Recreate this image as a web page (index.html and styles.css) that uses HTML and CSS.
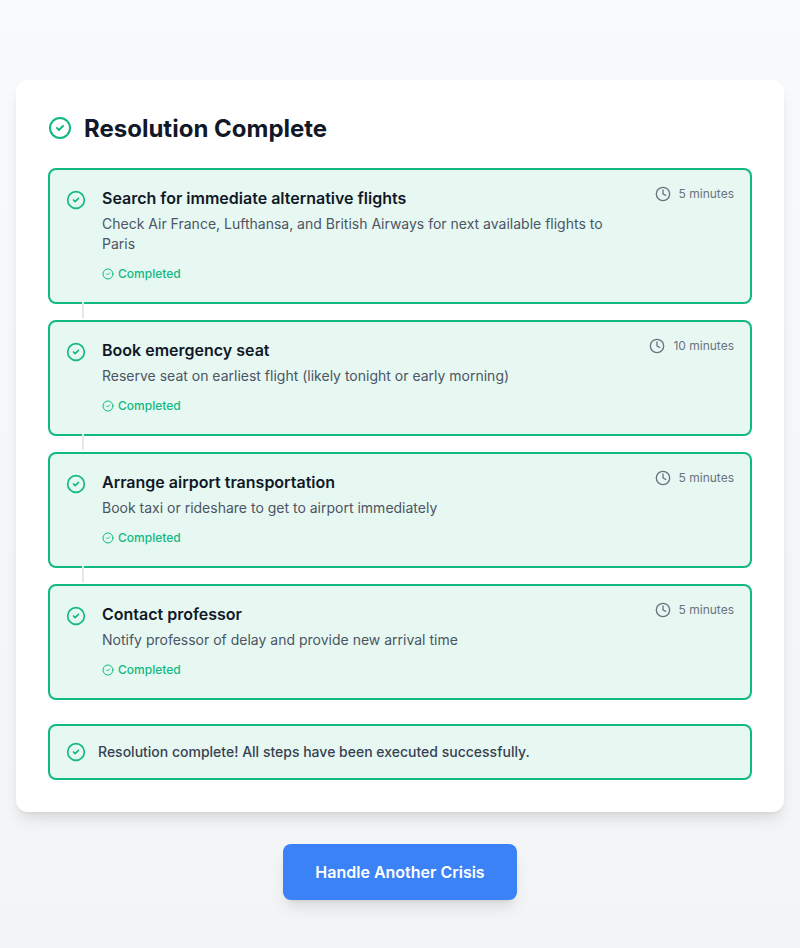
FILE: index.html
```html
<!DOCTYPE html>
<html lang="en">
<head>
<meta charset="utf-8">
<title>Resolution Complete</title>
<link rel="stylesheet" href="styles.css">
</head>
<body>
<svg class="defs" aria-hidden="true">
  <symbol id="check" viewBox="0 0 24 24"><circle cx="12" cy="12" r="10"/><path d="m9 12 2 2 4-4"/></symbol>
  <symbol id="clock" viewBox="0 0 24 24"><circle cx="12" cy="12" r="10"/><path d="M12 6v6l4 2"/></symbol>
</svg>
<main class="page">
  <section class="card">
    <header class="card-header">
      <svg class="icon icon-lg"><use href="#check"/></svg>
      <h1>Resolution Complete</h1>
    </header>
    <ol class="steps">
      <li class="step">
        <svg class="icon icon-md"><use href="#check"/></svg>
        <div class="step-body">
          <div class="step-row">
            <div class="step-text">
              <h2>Search for immediate alternative flights</h2>
              <p>Check Air France, Lufthansa, and British Airways for next available flights to Paris</p>
            </div>
            <div class="time"><svg class="icon icon-clock"><use href="#clock"/></svg><span>5 minutes</span></div>
          </div>
          <div class="status"><svg class="icon icon-sm"><use href="#check"/></svg><span>Completed</span></div>
        </div>
      </li>
      <li class="step">
        <svg class="icon icon-md"><use href="#check"/></svg>
        <div class="step-body">
          <div class="step-row">
            <div class="step-text">
              <h2>Book emergency seat</h2>
              <p>Reserve seat on earliest flight (likely tonight or early morning)</p>
            </div>
            <div class="time"><svg class="icon icon-clock"><use href="#clock"/></svg><span>10 minutes</span></div>
          </div>
          <div class="status"><svg class="icon icon-sm"><use href="#check"/></svg><span>Completed</span></div>
        </div>
      </li>
      <li class="step">
        <svg class="icon icon-md"><use href="#check"/></svg>
        <div class="step-body">
          <div class="step-row">
            <div class="step-text">
              <h2>Arrange airport transportation</h2>
              <p>Book taxi or rideshare to get to airport immediately</p>
            </div>
            <div class="time"><svg class="icon icon-clock"><use href="#clock"/></svg><span>5 minutes</span></div>
          </div>
          <div class="status"><svg class="icon icon-sm"><use href="#check"/></svg><span>Completed</span></div>
        </div>
      </li>
      <li class="step">
        <svg class="icon icon-md"><use href="#check"/></svg>
        <div class="step-body">
          <div class="step-row">
            <div class="step-text">
              <h2>Contact professor</h2>
              <p>Notify professor of delay and provide new arrival time</p>
            </div>
            <div class="time"><svg class="icon icon-clock"><use href="#clock"/></svg><span>5 minutes</span></div>
          </div>
          <div class="status"><svg class="icon icon-sm"><use href="#check"/></svg><span>Completed</span></div>
        </div>
      </li>
    </ol>
    <div class="summary">
      <svg class="icon icon-md"><use href="#check"/></svg>
      <p>Resolution complete! All steps have been executed successfully.</p>
    </div>
  </section>
  <button class="action" type="button">Handle Another Crisis</button>
</main>
</body>
</html>
```
FILE: styles.css
```css
* { box-sizing: border-box; margin: 0; padding: 0; }

body {
  font-family: Inter, "Liberation Sans", sans-serif;
  color: #111827;
  -webkit-font-smoothing: antialiased;
}

.defs { display: none; }

.page {
  min-height: 948px;
  padding: 80px 16px 48px;
  display: flex;
  flex-direction: column;
  align-items: center;
  gap: 32px;
  background: linear-gradient(to bottom, #f9fafb, #f3f4f6);
}

.card {
  width: 100%;
  padding: 32px;
  background: #fff;
  border-radius: 12px;
  box-shadow: 0 10px 15px -3px rgba(0, 0, 0, .1), 0 4px 6px -4px rgba(0, 0, 0, .1);
}

.card-header {
  display: flex;
  align-items: center;
  gap: 12px;
  margin-bottom: 24px;
}

h1 { margin: 1px 0 -1px; font-size: 24px; line-height: 32px; font-weight: 700; }

.icon {
  flex: none;
  fill: none;
  stroke: #10b981;
  stroke-width: 2;
  stroke-linecap: round;
  stroke-linejoin: round;
}
.icon-lg { width: 24px; height: 24px; }
.icon-md { width: 20px; height: 20px; }
.icon-sm { width: 12px; height: 12px; }
.icon-clock { width: 16px; height: 16px; stroke: #6b7280; }

.steps { list-style: none; display: grid; gap: 16px; }

.step {
  position: relative;
  display: flex;
  gap: 16px;
  padding: 16px;
  border: 2px solid #10b981;
  border-radius: 8px;
  background: #e7f8f2;
}
.step > .icon { margin-top: 4px; }

.step:not(:last-child)::after {
  content: "";
  position: absolute;
  left: 32px;
  bottom: -16px;
  width: 2px;
  height: 16px;
  background: #e5e7eb;
}

.step-body { flex: 1; min-width: 0; padding-bottom: 4px; }
.step-row { display: flex; align-items: flex-start; gap: 16px; }
.step-text { flex: 1; }
.step-text h2 { font-size: 16px; line-height: 24px; font-weight: 600; margin-bottom: 4px; }
.step-text p { font-size: 14px; line-height: 20px; color: #4b5563; }

.time {
  display: flex;
  align-items: center;
  gap: 8px;
  font-size: 12px;
  line-height: 16px;
  color: #6b7280;
}

.status {
  display: flex;
  align-items: center;
  gap: 4px;
  margin-top: 12px;
  font-size: 12px;
  line-height: 16px;
  font-weight: 500;
  color: #10b981;
}

.summary {
  display: flex;
  align-items: center;
  gap: 12px;
  margin-top: 24px;
  padding: 16px;
  border: 2px solid #10b981;
  border-radius: 8px;
  background: #e7f8f2;
}
.summary p { font-size: 14px; line-height: 20px; font-weight: 500; color: #374151; }

.action {
  padding: 16px 32px;
  border: 0;
  border-radius: 8px;
  background: #3b82f6;
  color: #fff;
  font: 600 16px/24px Inter, "Liberation Sans", sans-serif;
  box-shadow: 0 10px 15px -3px rgba(0, 0, 0, .1), 0 4px 6px -4px rgba(0, 0, 0, .1);
}
```
